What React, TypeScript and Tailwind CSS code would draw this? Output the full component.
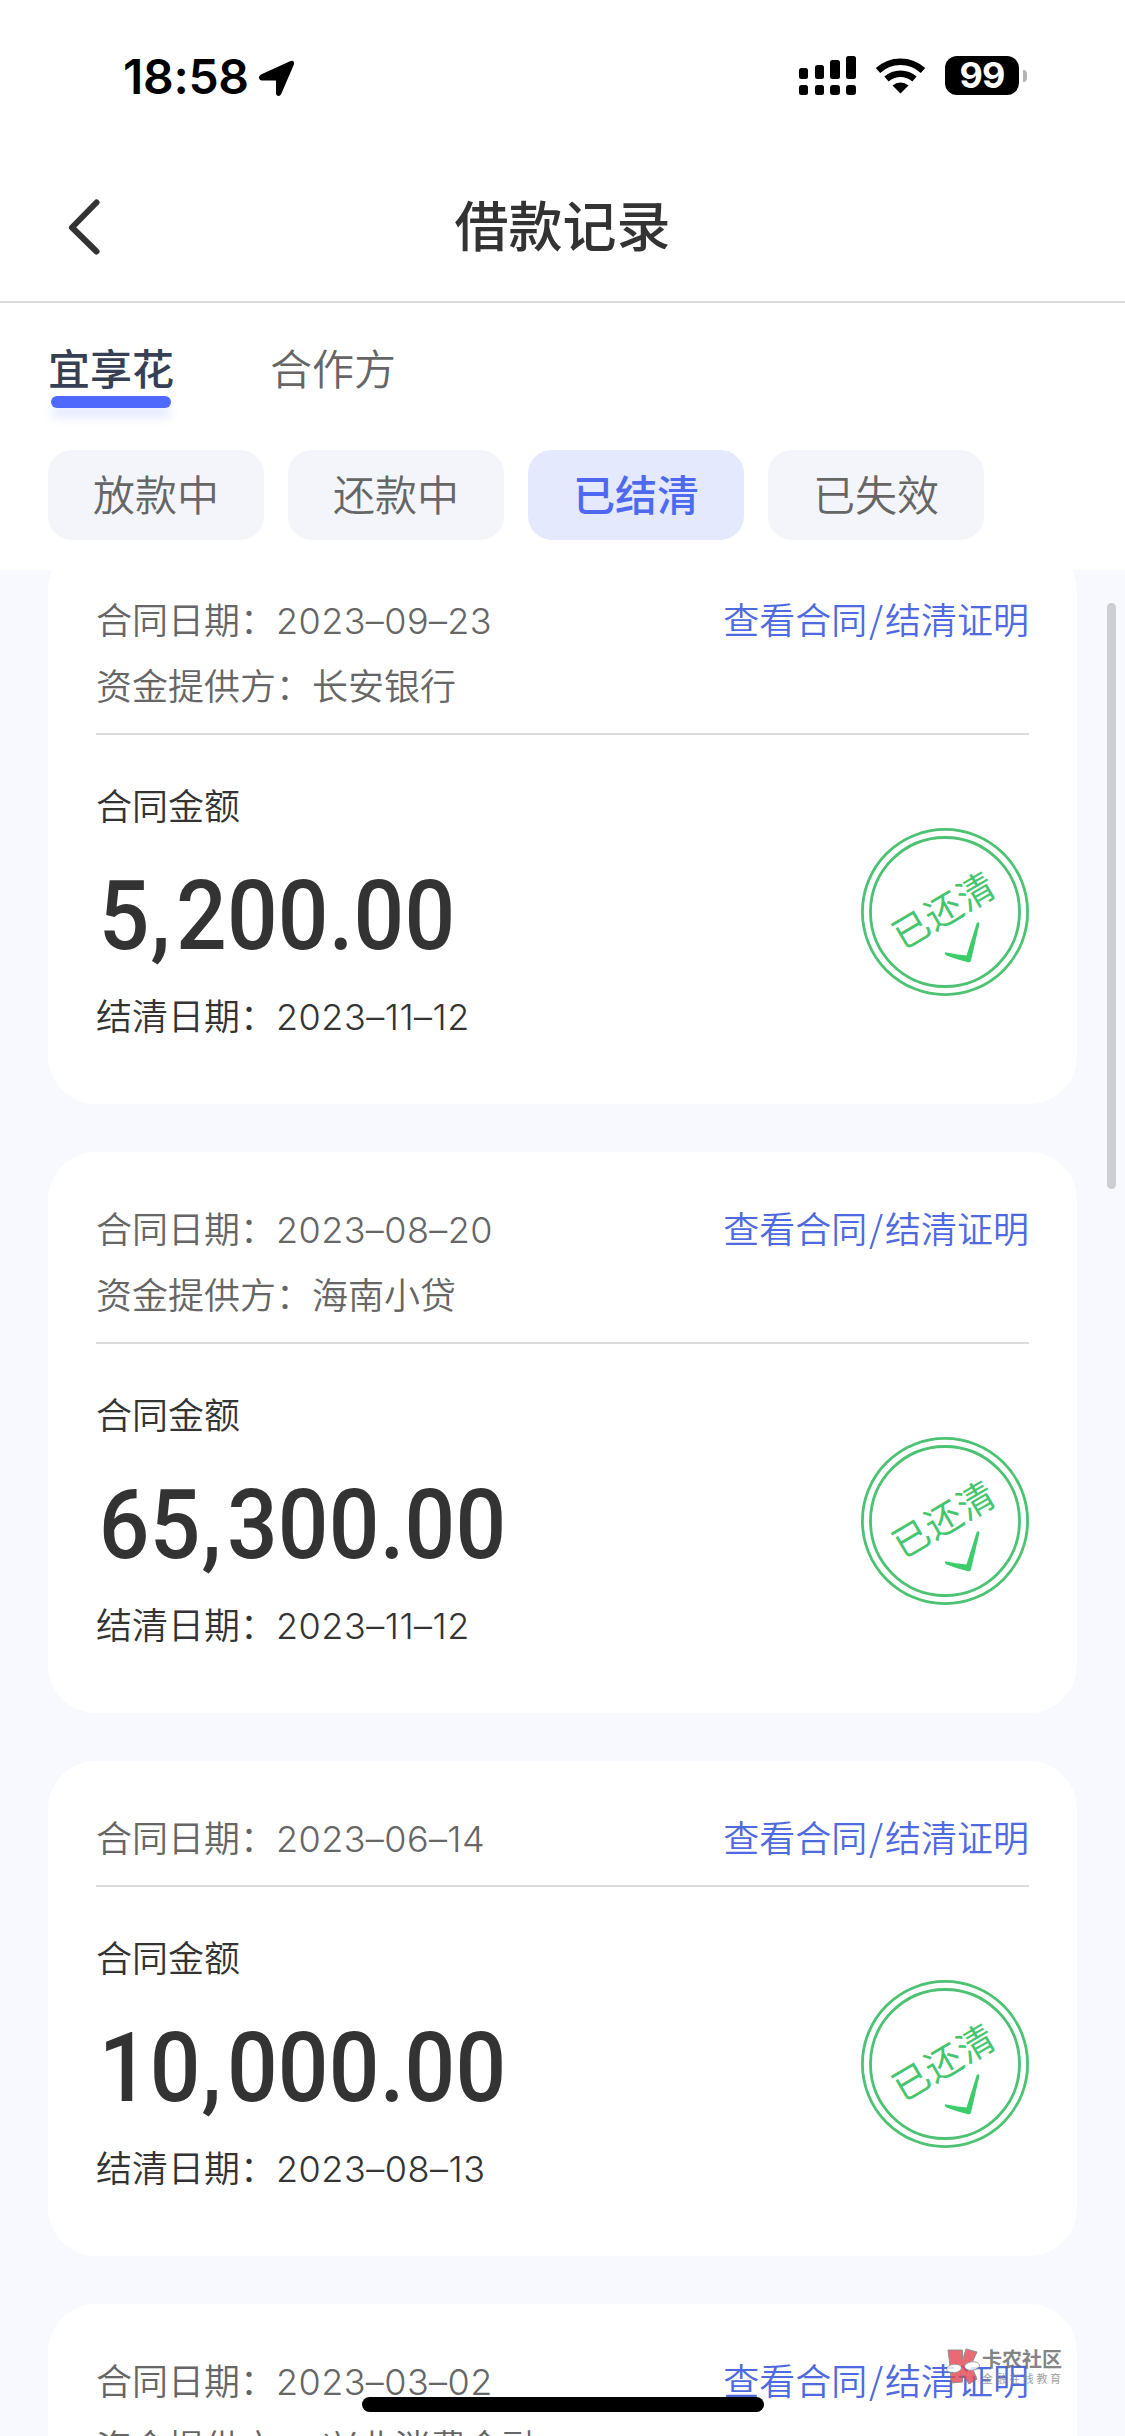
const cjk = "font-['Inter','Noto_Sans_CJK_SC',sans-serif]";

type Loan = {
  date: string;
  provider?: string;
  amount: string;
  settled: string;
};

const loans: Loan[] = [
  { date: '2023–09–23', provider: '长安银行', amount: '5,200.00', settled: '2023–11–12' },
  { date: '2023–08–20', provider: '海南小贷', amount: '65,300.00', settled: '2023–11–12' },
  { date: '2023–06–14', amount: '10,000.00', settled: '2023–08–13' },
  { date: '2023–03–02', provider: ' 兴业消费金融', amount: '5,000.00', settled: '2023–06–02' },
];

function StatusBar() {
  return (
    <div className="flex h-[150px] items-start justify-between pl-[123px] pr-[98px] pt-[56px] text-black">
      <div className="flex items-center">
        <span className="text-[48px] font-semibold leading-[42px] tracking-[-0.3px]">18:58</span>
        <svg className="ml-[8px] h-[40px] w-[40px]" viewBox="0 0 40 40">
          <path d="M4 17.500 33 4.200q5-1.500 3.800 3.600L24.200 37q-1 2.300-3.200 2-2-.5-2-2.800V23.500H5q-2.500 0-3-2.500-.3-2.300 2-3.500z" fill="#000" />
        </svg>
      </div>
      <div className="flex items-start">
        <svg className="h-[39px] w-[57px]" viewBox="0 0 57 39">
          <rect x="0" y="12" width="9" height="11" rx="2.500" />
          <rect x="16" y="9" width="9" height="14" rx="2.500" />
          <rect x="31" y="4" width="10" height="19" rx="2.500" />
          <rect x="47" y="0" width="10" height="23" rx="2.500" />
          <rect x="0" y="29" width="9" height="10" rx="2.500" />
          <rect x="16" y="29" width="9" height="10" rx="2.500" />
          <rect x="31" y="29" width="10" height="10" rx="3" />
          <rect x="47" y="29" width="10" height="10" rx="3" />
        </svg>
        <svg className="ml-[19px] mt-px h-[37px] w-[51px]" viewBox="0 0 51 37">
          <path d="M3 13.500a33 33 0 0 1 45 0" fill="none" stroke="#000" strokeWidth="6.500" />
          <path d="M11.500 22a21 21 0 0 1 28 0" fill="none" stroke="#000" strokeWidth="6.500" />
          <path d="M25.500 36.500 17.500 28.500a12 12 0 0 1 16 0z" />
        </svg>
        <div className="ml-[19px] flex h-[39px] w-[74px] items-center justify-center rounded-[12px] bg-black text-[36px] font-bold leading-[39px] tracking-[-1px] text-white">
          99
        </div>
        <div className="ml-[4px] mt-[14px] h-[12px] w-[4px] rounded-r-full bg-[#b4b4b4]" />
      </div>
    </div>
  );
}

function Stamp() {
  return (
    <svg className="h-[168px] w-[168px]" viewBox="0 0 168 168">
      <circle cx="84" cy="84" r="82.600" fill="none" stroke="#4cc273" strokeWidth="2.800" />
      <circle cx="84" cy="84" r="74.500" fill="none" stroke="#4cc273" strokeWidth="2.800" />
      <text
        x="83"
        y="95.500"
        fontSize="36.500"
        letterSpacing="1"
        textAnchor="middle"
        transform="rotate(-30.500 83 82.500)"
        fill="#45c56e"
        className="font-['Noto_Sans_CJK_SC',sans-serif] font-normal"
      >
        已还清
      </text>
      <path
        d="M84.300 124.300q-1.300 1.700.6 2.900Q97 132 107 134.300q2.400.4 3-1.800L118.500 95.500q-.9-2-2.700-.7L105.500 127.500Q95 126.500 84.300 124.300z"
        fill="#3ecb6c"
      />
    </svg>
  );
}

function LoanCard({ loan }: { loan: Loan }) {
  return (
    <article className="w-full shrink-0 rounded-[48px] bg-white px-[48px] pb-[54px] pt-[45px] text-[36px] font-[350] leading-[66px] text-[#333]">
      <header className="border-b-2 border-[#dcdcdc] pb-[13px] text-[#666]">
        <div className="flex h-[66px] justify-between">
          <span>
            合同日期：<span className="tracking-[0.4px]">{loan.date}</span>
          </span>
          <a className="text-[#4f6adf]">
            查看合同<span className="px-[1.75px] font-['Noto_Sans_CJK_SC',sans-serif] leading-[0]">/</span>结清证明
          </a>
        </div>
        {loan.provider && <div className="whitespace-pre">资金提供方：{loan.provider}</div>}
      </header>
      <div className="flex items-start justify-between">
        <div className="pt-[39px]">
          <div>合同金额</div>
          <div className="h-[144px] origin-left scale-x-[0.92] whitespace-nowrap pl-[3px] font-['Roboto',sans-serif] text-[97px] font-medium leading-[152px]">
            {loan.amount.split('').map((ch, i) => (
              <span key={i} className={ch === ',' ? 'pl-px pr-[6px]' : ch === '.' ? 'px-0' : 'pr-[0.2px]'}>
                {ch}
              </span>
            ))}
          </div>
          <div>
            结清日期：<span className="tracking-[0.5px]">{loan.settled}</span>
          </div>
        </div>
        <div className="pt-[93px]">
          <Stamp />
        </div>
      </div>
    </article>
  );
}

function Watermark() {
  return (
    <div className="absolute left-[945px] top-[2348px] flex opacity-80">
      <svg className="h-[38px] w-[36px]" viewBox="0 0 36 38">
        <path d="M3 2H17.500V12L21 1 32 4 26 17 32 31 24 36 17.500 27V34L6 35 5 18z" fill="#e64552" stroke="#777" />
        <ellipse cx="9" cy="20.500" rx="7.500" ry="4.200" fill="#fff" stroke="#777" strokeWidth="0.800" transform="rotate(-8 9 20.500)" />
        <ellipse cx="27" cy="18" rx="7.500" ry="4.200" fill="#fff" stroke="#777" strokeWidth="0.800" transform="rotate(-8 27 18)" />
      </svg>
      <div className="flex flex-col pl-[1px] font-['Noto_Sans_CJK_SC',sans-serif]">
        <span className="text-[20px] font-bold leading-[22px] text-[#666]">卡农社区</span>
        <span className="text-[11px] leading-[16px] tracking-[2.600px] text-[#888]">金融在线教育</span>
      </div>
    </div>
  );
}

const chips = ['放款中', '还款中', '已结清', '已失效'];

export default function App() {
  return (
    <div className={`relative flex h-[2436px] w-[1125px] flex-col overflow-hidden bg-white ${cjk}`}>
      <StatusBar />
      <div className="flex h-[153px] shrink-0 items-center border-b-2 border-[#dcdcdc] px-[66px] pt-[3px]">
        <svg className="h-[60px] w-[36px]" viewBox="0 0 36 60">
          <path d="M30.500 5.500 6 30.500 30.500 54.500" fill="none" stroke="#333" strokeWidth="6" strokeLinecap="round" strokeLinejoin="round" />
        </svg>
        <h1 className="flex-1 pr-[36px] pt-px text-center text-[54px] font-medium leading-[60px] text-[#333]">借款记录</h1>
      </div>
      <div className="flex h-[147px] shrink-0 gap-[96px] px-[48px] pt-[37px] text-[42px] leading-[60px]">
        <div className="flex flex-col items-center">
          <span className="h-[56px] font-medium text-[#363f54]">宜享花</span>
          <div className="h-[12px] w-[120px] rounded-full bg-[#4e69fc] shadow-[0_10px_10px_rgba(78,105,252,0.14)]" />
        </div>
        <span className="font-[350] text-[#666]">合作方</span>
      </div>
      <div className="flex h-[120px] shrink-0 gap-[24px] px-[48px]">
        {chips.map((chip) => (
          <div
            key={chip}
            className={`flex h-[90px] w-[216px] items-center justify-center rounded-[24px] pt-[2px] text-[42px] leading-[60px] ${
              chip === '已结清' ? 'bg-[#e4e9fe] font-medium text-[#4e69f0]' : 'bg-[#f4f5fa] font-[350] text-[#666]'
            }`}
          >
            {chip}
          </div>
        ))}
      </div>
      <main className="relative flex min-h-0 flex-1 flex-col overflow-hidden bg-[#f8f9ff] px-[48px]">
        <div className="-mt-[27px] flex flex-col gap-[48px]">
          {loans.map((loan) => (
            <LoanCard key={loan.date} loan={loan} />
          ))}
        </div>
        <div className="absolute right-[9px] top-[33px] h-[586px] w-[9px] rounded-full bg-[#cdced3]" />
      </main>
      <Watermark />
      <div className="absolute bottom-[24px] left-[362px] h-[15px] w-[402px] rounded-full bg-black" />
    </div>
  );
}
